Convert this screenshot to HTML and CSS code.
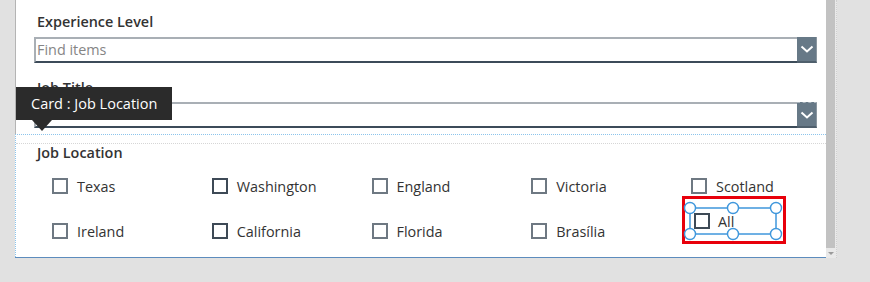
FILE: index.html
```html
<!DOCTYPE html>
<html>
<head>
<meta charset="utf-8">
<link rel="stylesheet" href="styles.css">
</head>
<body>
<div class="screen">
  <div class="gutter"></div>
  <div class="panel">
    <div class="card card-exp">
      <div class="label">Experience Level</div>
      <div class="combo">
        <div class="combo-input placeholder">Find items</div>
        <div class="combo-btn"><svg width="14" height="8" viewBox="0 0 14 8"><path d="M1.5 1.5 L7 6.5 L12.5 1.5" fill="none" stroke="#fff" stroke-width="2"/></svg></div>
      </div>
    </div>
    <div class="card card-title">
      <div class="label">Job Title</div>
      <div class="combo">
        <div class="combo-input"></div>
        <div class="combo-btn btn-dashed"><svg width="14" height="8" viewBox="0 0 14 8"><path d="M1.5 1.5 L7 6.5 L12.5 1.5" fill="none" stroke="#fff" stroke-width="2"/></svg></div>
      </div>
      <div class="tooltip">Card : Job Location</div>
    </div>
    <div class="card card-selected">
      <div class="inner">
        <div class="label">Job Location</div>
        <div class="grid">
          <div class="item"><span class="box"></span><span>Texas</span></div>
          <div class="item"><span class="box box-dark"></span><span>Washington</span></div>
          <div class="item"><span class="box"></span><span>England</span></div>
          <div class="item"><span class="box"></span><span>Victoria</span></div>
          <div class="item"><span class="box"></span><span>Scotland</span></div>
          <div class="item"><span class="box"></span><span>Ireland</span></div>
          <div class="item"><span class="box box-dark"></span><span>California</span></div>
          <div class="item"><span class="box"></span><span>Florida</span></div>
          <div class="item"><span class="box"></span><span>Brasília</span></div>
          <div class="item item-all">
            <div class="sel">
              <span class="box box-dark"></span><span>All</span>
              <svg class="handles" width="104" height="48" viewBox="0 0 104 48">
                <rect x="1.5" y="1.5" width="101" height="45" fill="none" stroke="#e8000b" stroke-width="3"/>
                <rect x="8" y="12" width="86" height="26" fill="none" stroke="#3f97dc" stroke-width="1.5"/>
                <g fill="#fff" stroke="#3f97dc" stroke-width="1.4">
                  <circle cx="8" cy="12" r="5.5"/>
                  <circle cx="51" cy="12" r="5.5"/>
                  <circle cx="94" cy="12" r="5.5"/>
                  <circle cx="8" cy="38" r="5.5"/>
                  <circle cx="51" cy="38" r="5.5"/>
                  <circle cx="94" cy="38" r="5.5"/>
                </g>
              </svg>
            </div>
          </div>
        </div>
      </div>
    </div>
  </div>
  <div class="scrollbar">
    <div class="thumb"></div>
    <div class="arrow"></div>
  </div>
</div>
</body>
</html>
```
FILE: styles.css
```css
html, body {
  margin: 0;
  padding: 0;
  background: #e1e1e1;
  font-family: "Open Sans", "Noto Sans", sans-serif;
}
.screen {
  display: flex;
  align-items: flex-start;
  width: 870px;
  height: 282px;
}
.gutter {
  width: 15px;
  flex: none;
}
.panel {
  width: 811px;
  height: 257px;
  background: #fff;
  border-bottom: 1px solid #5d8cbd;
  display: flex;
  flex-direction: column;
  flex: none;
}
.card {
  border-left: 1px solid #b4b4b4;
  padding: 0 9px 0 18px;
  position: relative;
  box-sizing: border-box;
  flex: none;
}
.card-exp {
  height: 63px;
  padding-top: 12px;
}
.card-title {
  height: 71px;
  padding-top: 15px;
}
.label {
  font-size: 14.4px;
  font-weight: 600;
  color: #333;
  line-height: 20px;
  height: 20px;
  padding-left: 3px;
}
.card-exp .label { margin-bottom: 5px; }
.card-title .label { margin-bottom: 4px; }
.combo {
  display: flex;
  height: 26px;
}
.combo-input {
  flex: 1;
  border-top: 2px solid #a9afb5;
  border-left: 2px solid #a9afb5;
  border-bottom: 2px solid #3c4b59;
  font-size: 14.4px;
  line-height: 21px;
  padding-left: 1px;
  color: #333;
}
.placeholder { color: #858585; }
.combo-btn {
  width: 20px;
  background: #677987;
  border-bottom: 2px solid #4f5f6c;
  display: flex;
  align-items: center;
  justify-content: center;
  box-sizing: border-box;
  border-right: 1px solid #8a969f;
}
.btn-dashed { border-top: 1px dashed #aab4bc; }
.tooltip {
  position: absolute;
  left: 0;
  top: 24px;
  width: 156px;
  height: 33px;
  box-sizing: border-box;
  background: #2b2b2b;
  color: #fff;
  font-size: 14.5px;
  line-height: 33px;
  padding-left: 15px;
  z-index: 2;
}
.tooltip::after {
  content: "";
  position: absolute;
  left: 16px;
  top: 33px;
  border-top: 11px solid #2b2b2b;
  border-left: 10.5px solid transparent;
  border-right: 10.5px solid transparent;
}
.card-selected {
  flex: 1;
  padding: 0;
  border-left: 1px dotted #8cc4ec;
  border-top: 1px dotted #8cc4ec;
}
.inner {
  border-top: 1px dotted #d6d6d6;
  margin-top: 8px;
  padding: 0 0 0 18px;
}
.card-selected .label {
  line-height: 18px;
  height: 18px;
}
.grid {
  display: grid;
  grid-template-columns: repeat(5, 159.75px);
  grid-auto-rows: 22px;
  row-gap: 23px;
  margin-top: 13px;
  margin-left: 18px;
}
.item {
  display: flex;
  align-items: center;
  font-size: 14.4px;
  color: #333;
  gap: 9px;
}
.box {
  width: 16px;
  height: 16px;
  box-sizing: border-box;
  border: 2px solid #6e7882;
  background: #fff;
  flex: none;
}
.box-dark { border-color: #3e4a56; }
.item-all {
  align-items: flex-start;
}
.sel {
  position: relative;
  margin-top: -12px;
  margin-left: -1px;
  width: 86px;
  height: 26px;
  display: flex;
  align-items: center;
  padding-left: 4px;
  box-sizing: border-box;
  gap: 8px;
}
.handles {
  position: absolute;
  left: -8px;
  top: -12px;
}
.scrollbar {
  width: 10px;
  height: 258px;
  flex: none;
  display: flex;
  flex-direction: column;
  border-right: 1px dotted #cfcfcf;
  background: #e9e9e9;
}
.thumb {
  height: 248px;
  width: 9px;
  background: #c2c2c2;
}
.arrow {
  flex: 1;
  display: flex;
  justify-content: center;
  align-items: center;
}
.arrow::before {
  content: "";
  border-top: 3px solid #9a9a9a;
  border-left: 3px solid transparent;
  border-right: 3px solid transparent;
}
```
